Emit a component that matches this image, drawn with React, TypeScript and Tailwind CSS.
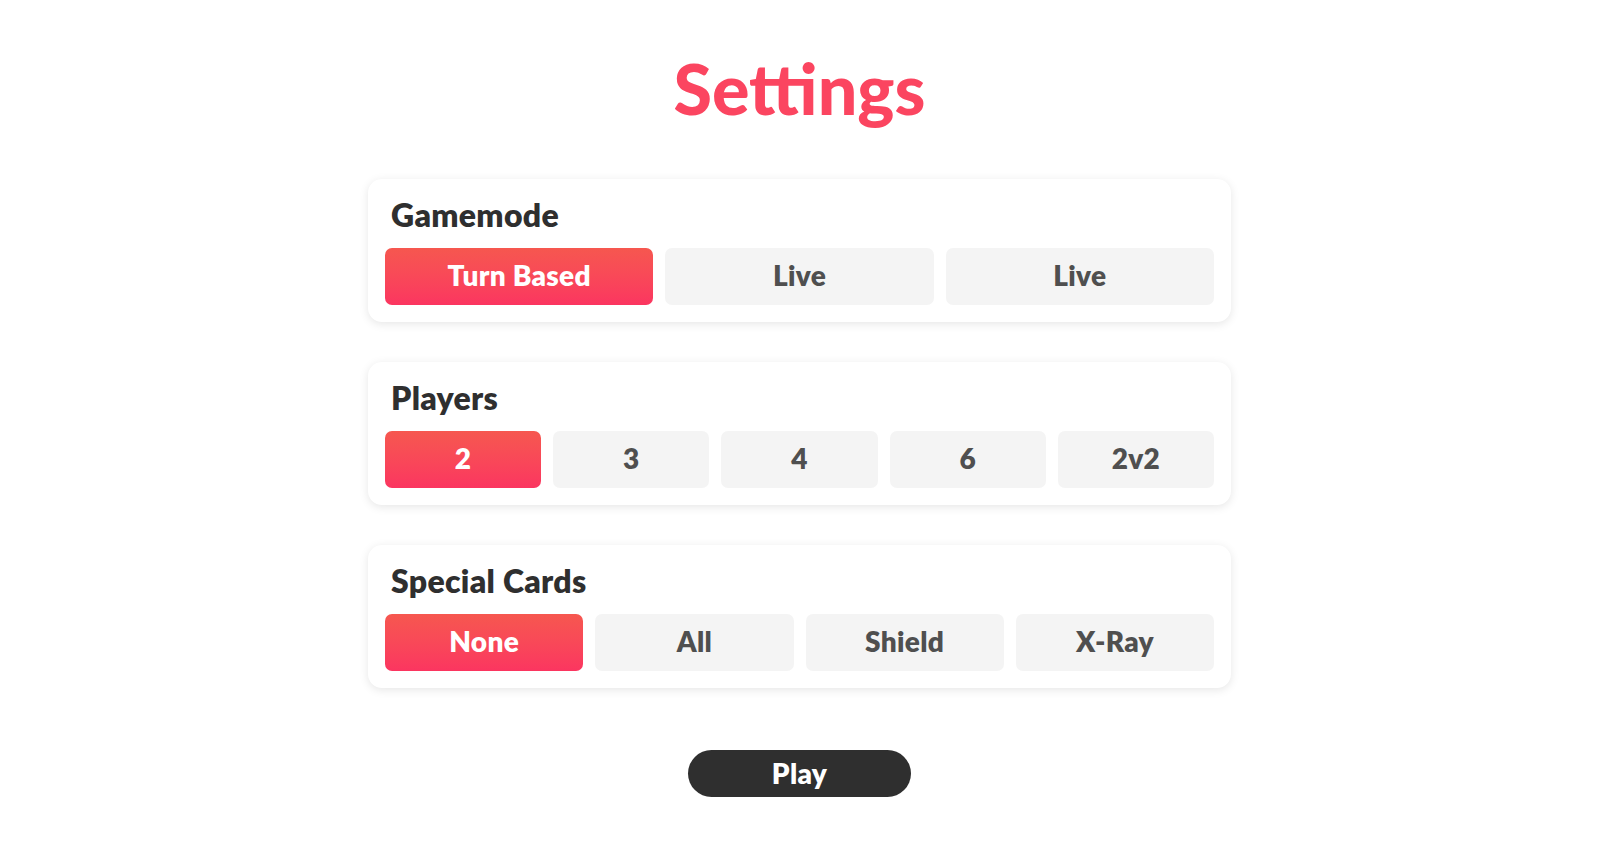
import { useState } from "react";

const font = { fontFamily: '"Lato", "Noto Sans", sans-serif' };

const OptionRow = ({
  options,
  selected,
  onSelect,
  cols,
}: {
  options: string[];
  selected: number;
  onSelect: (i: number) => void;
  cols: string;
}) => (
  <div className={`grid ${cols} gap-[12px]`}>
    {options.map((opt, i) => (
      <button
        key={i}
        onClick={() => onSelect(i)}
        className={
          i === selected
            ? "h-[57px] pb-[3px] rounded-[7px] bg-gradient-to-b from-[#f6574f] to-[#fb3560] text-white text-[28px] font-extrabold tracking-[0.3px]"
            : "h-[57px] pb-[3px] rounded-[7px] bg-[#f4f4f4] text-[#4f4f4f] text-[28px] font-extrabold tracking-[0.3px]"
        }
      >
        {opt}
      </button>
    ))}
  </div>
);

const Card = ({ title, children }: { title: string; children: React.ReactNode }) => (
  <div className="rounded-[14px] bg-white shadow-[0_2px_10px_rgba(0,0,0,0.1)] px-[17px] pt-[18px] pb-[17px]">
    <h2 className="pl-[6px] h-9 leading-9 mb-[15px] text-[32px] font-extrabold text-[#2f2f2f] tracking-[0.3px]">
      {title}
    </h2>
    {children}
  </div>
);

export default function App() {
  const [mode, setMode] = useState(0);
  const [players, setPlayers] = useState(0);
  const [cards, setCards] = useState(0);

  return (
    <div className="min-h-screen bg-white" style={font}>
      <div className="w-[863px] mx-auto pb-10">
        <div className="h-[179px] flex items-center justify-center">
          <h1 className="text-[70px] font-black text-[#fb4560] leading-none pb-1">
            Settings
          </h1>
        </div>

        <div className="flex flex-col gap-[40px]">
          <Card title="Gamemode">
            <OptionRow
              cols="grid-cols-3"
              options={["Turn Based", "Live", "Live"]}
              selected={mode}
              onSelect={setMode}
            />
          </Card>
          <Card title="Players">
            <OptionRow
              cols="grid-cols-5"
              options={["2", "3", "4", "6", "2v2"]}
              selected={players}
              onSelect={setPlayers}
            />
          </Card>
          <Card title="Special Cards">
            <OptionRow
              cols="grid-cols-4"
              options={["None", "All", "Shield", "X-Ray"]}
              selected={cards}
              onSelect={setCards}
            />
          </Card>
        </div>

        <div className="flex justify-center mt-[62px]">
          <button className="w-[223px] h-[47px] pb-[2px] rounded-full bg-[#2f2f2f] text-white text-[28px] font-extrabold tracking-[0.3px]">
            Play
          </button>
        </div>
      </div>
    </div>
  );
}
